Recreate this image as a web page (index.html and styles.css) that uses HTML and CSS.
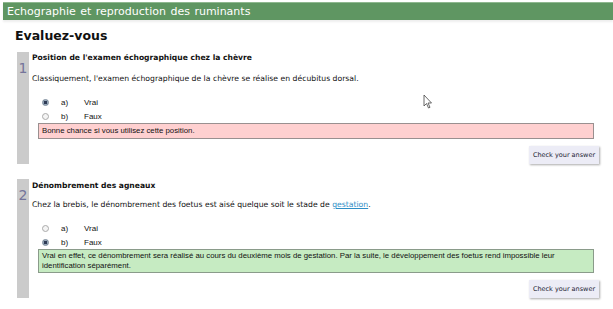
FILE: index.html
```
<html>
<head>
<link rel="stylesheet" href="styles.css">
<title>Echographie et reproduction des ruminants</title>
</head>
<body>
<div class=header>Echographie et reproduction des ruminants</div>

<div class=wrap>
<h2>Evaluez-vous</h2>

<div class=question>
	<div class=num>1</div>
	<div class=body>
		<div class=title>Position de l'examen échographique chez la chèvre</div>
		<p class=text>Classiquement, l'examen échographique de la chèvre se réalise en décubitus dorsal.</p>
		<div class=answers>
			<label class=answer><input type=radio name=q1 checked><span class=letter>a)</span>Vrai</label>
			<label class=answer><input type=radio name=q1><span class=letter>b)</span>Faux</label>
		</div>
		<div class="feedback wrong">Bonne chance si vous utilisez cette position.</div>
		<div class=actions><button>Check your answer</button></div>
	</div>
</div>

<div class=question>
	<div class=num>2</div>
	<div class=body>
		<div class=title>Dénombrement des agneaux</div>
		<p class=text>Chez la brebis, le dénombrement des foetus est aisé quelque soit le stade de <a href="#">gestation</a>.</p>
		<div class=answers>
			<label class=answer><input type=radio name=q2><span class=letter>a)</span>Vrai</label>
			<label class=answer><input type=radio name=q2 checked><span class=letter>b)</span>Faux</label>
		</div>
		<div class="feedback right">Vrai en effet, ce dénombrement sera réalisé au cours du deuxième mois de gestation. Par la suite, le développement des foetus rend impossible leur identification séparément.</div>
		<div class=actions><button>Check your answer</button></div>
	</div>
</div>
</div>

<svg class=cursor width="10" height="15" viewBox="0 0 10 15"><path d="M1 1 L1 12 L3.5 9.5 L5.5 14 L7 13.3 L5 9 L8.5 9 Z" fill="#fff" stroke="#444" stroke-width="0.8"/></svg>
</body>
</html>
```

FILE: styles.css
```
body{margin:0; font-family:"DejaVu Sans", Verdana, sans-serif; color:#111; position:relative;}
.header{margin:2px 0 0 3px; height:17px; line-height:17px; padding-left:4px; background:#5f9662; border-top:1px solid #8fb890; color:#fff; font-size:11px; word-spacing:1px; box-shadow:0 2px 2px #eee;}
.wrap{padding:0 13px 0 17px;}
h2{margin:9px 0 0 -2px; font-size:12.5px; font-weight:bold; line-height:14px;}

.question{display:flex; margin-top:9px;}
.question + .question{margin-top:15px;}
.num{width:12px; flex:none; background:#cbcbcb; color:#74749a; font-size:14px; line-height:14px; text-align:center; padding-top:9px;}
.body{flex:1; padding-left:3px;}
.title{font-weight:bold; font-size:7.6px; line-height:10px; margin-top:1px;}
.question + .question .title{margin-top:2px;}
.text{margin:11px 0 0; font-size:7.7px; line-height:10px;}
.question + .question .text{margin-top:9px;}
.text a{color:#2f8ec6;}

.answers{margin-top:11px; font-family:"Liberation Sans", Arial, sans-serif; font-size:8px;}
.answer{display:flex; align-items:center; height:14px; padding-left:10px;}
.answer input{-webkit-appearance:none; appearance:none; width:7px; height:7px; margin:0 12px 0 0; border-radius:50%; border:1px solid #aaa; background:#f4f4f4;}
.answer input:checked{background:radial-gradient(circle, #2d3a55 0 1.5px, #9ab 2px); border-color:#789;}
.letter{width:23px;}

.feedback{margin:0 6px 0 6px; border:1px solid #9a9090; padding:2px 3px; font-family:"Liberation Sans", Arial, sans-serif; font-size:7.8px; line-height:10px;}
.wrong{background:#ffd0d0; min-height:10px;}
.right{background:#c6ebc2; border-color:#8a9b8a; padding:1px 3px;}

.actions{display:flex; justify-content:flex-end; margin-top:7px; padding-right:1px;}
button{width:70px; height:18px; padding:0; border:none; background:#ececf6; box-shadow:1px 1px 2px #aaa; font-family:"DejaVu Sans", Verdana, sans-serif; font-size:6.5px; color:#223;}

.cursor{position:absolute; left:423px; top:94px;}
```
